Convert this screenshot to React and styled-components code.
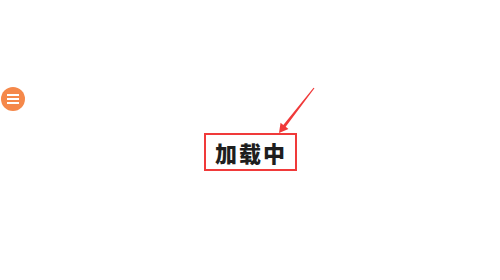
import React from 'react';
import styled, { createGlobalStyle } from 'styled-components';

const GlobalStyle = createGlobalStyle`
  html, body {
    margin: 0;
    padding: 0;
    background: #ffffff;
  }
`;

const Page = styled.div`
  width: 500px;
  height: 280px;
  display: flex;
  flex-direction: column;
  align-items: center;
  padding-top: 133px;
  box-sizing: border-box;
`;

const MenuButton = styled.button`
  position: fixed;
  left: 1px;
  top: 87px;
  width: 24px;
  height: 24px;
  border: none;
  border-radius: 50%;
  background: #f5884a;
  padding: 0;
  display: flex;
  flex-direction: column;
  align-items: center;
  justify-content: center;
  gap: 2px;
  cursor: pointer;
`;

const MenuLine = styled.span`
  display: block;
  width: 12px;
  height: 2px;
  background: #ffffff;
`;

const LoadingBox = styled.div`
  position: relative;
  width: 93px;
  height: 38px;
  box-sizing: border-box;
  border: 2px solid #f03a3a;
  display: flex;
  align-items: center;
  justify-content: center;
  font-family: "Noto Sans CJK SC", "Noto Sans", sans-serif;
  font-weight: 900;
  font-size: 22px;
  letter-spacing: 2px;
  text-indent: 2px;
  color: #1e1e1e;
`;

const Arrow = styled.svg`
  position: absolute;
  left: 70px;
  top: -50px;
  overflow: visible;
`;

export default function App() {
  return (
    <>
      <GlobalStyle />
      <MenuButton aria-label="menu">
        <MenuLine />
        <MenuLine />
        <MenuLine />
      </MenuButton>
      <Page>
        <LoadingBox>
          加载中
          <Arrow width="40" height="50" viewBox="0 0 40 50">
            <polygon
              points="38.47,3.37 9.68,41.82 12.45,43.97 3,48 4.55,37.83 7.32,39.98 37.53,2.63"
              fill="#f03a3a"
            />
          </Arrow>
        </LoadingBox>
      </Page>
    </>
  );
}
